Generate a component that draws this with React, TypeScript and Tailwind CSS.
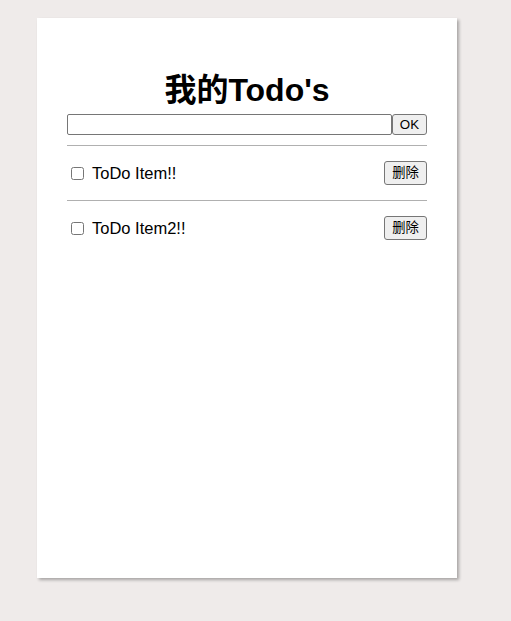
import { useState } from "react";

interface Todo {
  id: number;
  text: string;
  done: boolean;
}

const FONT = { fontFamily: '"Liberation Sans", Arial, "Noto Sans CJK SC", sans-serif' };

export default function App() {
  const [todos, setTodos] = useState<Todo[]>([
    { id: 1, text: "ToDo Item!!", done: false },
    { id: 2, text: "ToDo Item2!!", done: false },
  ]);
  const [text, setText] = useState("");

  const add = () => {
    const t = text.trim();
    if (!t) return;
    setTodos([...todos, { id: Date.now(), text: t, done: false }]);
    setText("");
  };

  const toggle = (id: number) =>
    setTodos(todos.map((t) => (t.id === id ? { ...t, done: !t.done } : t)));

  const remove = (id: number) => setTodos(todos.filter((t) => t.id !== id));

  return (
    <div className="min-h-[621px] bg-[#efebea] pt-[18px] pl-[37px]" style={FONT}>
      <div className="w-[420px] h-[560px] bg-white px-[30px] pt-[54px] shadow-[2px_2px_3px_rgba(0,0,0,0.3)]">
        <h1 className="text-[32px] leading-[37px] font-bold text-center text-black">我的Todo's</h1>

        <div className="flex mt-[5px]">
          <input
            type="text"
            value={text}
            onChange={(e) => setText(e.target.value)}
            className="w-[325px] h-[21px] border border-[#767676] rounded-[2px] px-[2px] text-[13px] outline-none"
            aria-label="New todo"
          />
          <button
            onClick={add}
            className="w-[35px] h-[21px] bg-[#efefef] border border-[#767676] rounded-[3px] text-[13.33px] leading-none text-black"
          >
            OK
          </button>
        </div>

        <div className="mt-[10px]">
          {todos.map((t) => (
            <div key={t.id}>
              <hr className="border-0 border-t border-[#b0b0b0]" />
              <div className="flex items-center h-[54px]">
                <input
                  type="checkbox"
                  checked={t.done}
                  onChange={() => toggle(t.id)}
                  className="w-[13px] h-[13px] m-0 ml-[4px]"
                />
                <span className="ml-[8px] text-[16.5px] text-black flex-1">{t.text}</span>
                <button
                  onClick={() => remove(t.id)}
                  className="w-[43px] h-[24px] bg-[#efefef] border border-[#767676] rounded-[3px] text-[13.33px] leading-none text-black"
                >
                  删除
                </button>
              </div>
            </div>
          ))}
        </div>
      </div>
    </div>
  );
}
